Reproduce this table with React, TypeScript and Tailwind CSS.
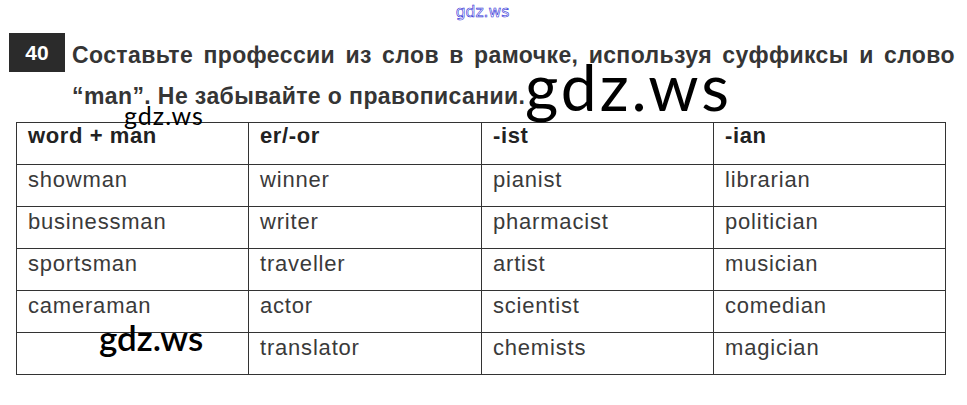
import React from "react";

const header = ["word + man", "er/-or", "-ist", "-ian"];
const rows = [
  ["showman", "winner", "pianist", "librarian"],
  ["businessman", "writer", "pharmacist", "politician"],
  ["sportsman", "traveller", "artist", "musician"],
  ["cameraman", "actor", "scientist", "comedian"],
  ["", "translator", "chemists", "magician"],
];

export default function App() {
  return (
    <div className="relative w-[967px] h-[405px] overflow-hidden bg-white font-['Liberation_Sans',Arial,sans-serif]">
      <div className="flex justify-center pt-[2px]">
        <span className="font-['DejaVu_Sans',sans-serif] text-[15.5px] leading-[20px] text-white [-webkit-text-stroke:0.6px_#2b2bd6] ml-[-2px]">
          gdz.ws
        </span>
      </div>

      <div className="flex mt-[11px] ml-[9px]">
        <div className="w-[56px] h-[39px] shrink-0 bg-[#2b2b2b] flex items-center justify-center pb-[1px]">
          <span className="text-white font-bold text-[21px] leading-none">40</span>
        </div>
        <div className="ml-[7px] mt-[2px] w-[883px] text-[23px] leading-[41px] font-bold text-[#353535] tracking-[0.4px]">
          <div className="text-justify [text-align-last:justify]">
            Составьте профессии из слов в рамочке, используя суффиксы и слово
          </div>
          <div>“man”. Не забывайте о правописании.</div>
        </div>
      </div>

      <div className="ml-[16px] mt-[5px] w-[930px] border-l border-t border-[#333] grid grid-cols-[232px_233px_232px_232px]">
        {header.map((h, i) => (
          <div
            key={`h${i}`}
            className="h-[42px] border-r border-b border-[#333] pl-[11px] pt-[2px] text-[22px] leading-[22px] tracking-[0.6px] font-bold text-[#222]"
          >
            {h}
          </div>
        ))}
        {rows.map((r, ri) =>
          r.map((c, ci) => (
            <div
              key={`${ri}-${ci}`}
              className="h-[42px] border-r border-b border-[#333] pl-[11px] pt-[4px] text-[22px] leading-[22px] tracking-[0.8px] text-[#3a3a3a]"
            >
              {c}
            </div>
          ))
        )}
      </div>

      <span className="absolute left-[525px] top-[55px] font-['Lato',sans-serif] text-[64px] tracking-[3px] leading-none text-black">
        gdz.ws
      </span>
      <span className="absolute left-[124px] top-[103px] font-['Lato',sans-serif] text-[25px] tracking-[1px] leading-none text-black">
        gdz.ws
      </span>
      <span className="absolute left-[99px] top-[320px] font-['Lato',sans-serif] font-semibold text-[35px] leading-none text-black">
        gdz.ws
      </span>
    </div>
  );
}
